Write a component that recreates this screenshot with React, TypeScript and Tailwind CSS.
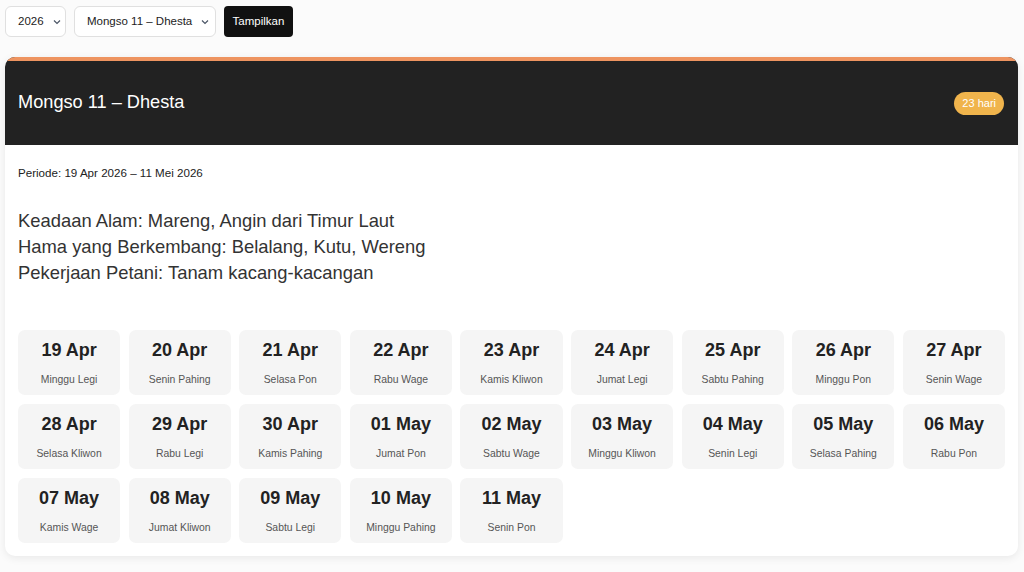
const days = [
  ["19 Apr", "Minggu Legi"],
  ["20 Apr", "Senin Pahing"],
  ["21 Apr", "Selasa Pon"],
  ["22 Apr", "Rabu Wage"],
  ["23 Apr", "Kamis Kliwon"],
  ["24 Apr", "Jumat Legi"],
  ["25 Apr", "Sabtu Pahing"],
  ["26 Apr", "Minggu Pon"],
  ["27 Apr", "Senin Wage"],
  ["28 Apr", "Selasa Kliwon"],
  ["29 Apr", "Rabu Legi"],
  ["30 Apr", "Kamis Pahing"],
  ["01 May", "Jumat Pon"],
  ["02 May", "Sabtu Wage"],
  ["03 May", "Minggu Kliwon"],
  ["04 May", "Senin Legi"],
  ["05 May", "Selasa Pahing"],
  ["06 May", "Rabu Pon"],
  ["07 May", "Kamis Wage"],
  ["08 May", "Jumat Kliwon"],
  ["09 May", "Sabtu Legi"],
  ["10 May", "Minggu Pahing"],
  ["11 May", "Senin Pon"],
];

const Chevron = () => (
  <svg width="10" height="10" viewBox="0 0 10 10" className="text-gray-600 shrink-0">
    <path d="M2 3.5 L5 6.5 L8 3.5" fill="none" stroke="currentColor" strokeWidth="1.2" />
  </svg>
);

const SelectBox = ({ label, width }: any) => {
  return (
    <div
      className={
        "h-[31px] flex items-center justify-between gap-2 pl-[12px] pr-[10px] bg-white border border-[#e0e0e0] rounded-[6px] text-[11.5px] text-[#222] whitespace-nowrap " +
        width
      }
    >
      <span>{label}</span>
      <Chevron />
    </div>
  );
};

const DayCard = ({ date, name }: any) => {
  return (
    <div className="h-[65px] bg-[#f5f5f5] rounded-[7px] flex flex-col items-center pt-[9px]">
      <div className="text-[18px] font-bold text-[#222] leading-[22px]">{date}</div>
      <div className="text-[10.4px] text-[#555] mt-[12px] leading-[14px]">{name}</div>
    </div>
  );
};

export default function App() {
  return (
    <div className="min-h-[572px] bg-[#fbfbfb] px-[5px] pt-[6px] pb-[16px] font-['Liberation_Sans',Arial,sans-serif]">
      <div className="flex items-center gap-[8px]">
        <SelectBox label="2026" width="w-[61px]" />
        <SelectBox label="Mongso 11 – Dhesta" width="w-[142px]" />
        <button className="h-[31px] w-[69px] bg-[#111] text-white text-[11.5px] rounded-[4px]">
          Tampilkan
        </button>
      </div>

      <div className="mt-[20px] w-[1013px] bg-white rounded-[10px] shadow-[0_2px_8px_rgba(0,0,0,0.08)] overflow-hidden">
        <div className="border-t-[4px] border-[#ee9460] bg-[#222222] h-[88px] flex items-center justify-between pl-[13px] pr-[14px]">
          <div className="text-[18.2px] text-white">Mongso 11 – Dhesta</div>
          <div className="h-[23px] px-[8px] flex items-center rounded-full bg-[#f0b44c] text-white text-[11px]">
            23 hari
          </div>
        </div>

        <div className="px-[13px] pt-[21px] pb-[13px]">
          <div className="text-[11.6px] text-[#222] leading-[14px]">Periode: 19 Apr 2026 – 11 Mei 2026</div>
          <div className="mt-[28px] text-[18.4px] text-[#333] leading-[26px]">
            <div>Keadaan Alam: Mareng, Angin dari Timur Laut</div>
            <div>Hama yang Berkembang: Belalang, Kutu, Wereng</div>
            <div>Pekerjaan Petani: Tanam kacang-kacangan</div>
          </div>

          <div className="mt-[44px] grid grid-cols-9 gap-x-[8.5px] gap-y-[9px]">
            {days.map(([d, n]) => (
              <DayCard key={d} date={d} name={n} />
            ))}
          </div>
        </div>
      </div>
    </div>
  );
}
